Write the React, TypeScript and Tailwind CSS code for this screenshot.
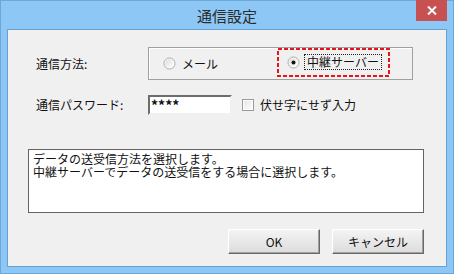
import React from 'react';

const font = { fontFamily: '"Noto Sans CJK JP", "Noto Sans", sans-serif' };

const Radio: React.FC<{ checked?: boolean }> = ({ checked }) => (
  <svg width="13" height="13" viewBox="0 0 13 13" className="shrink-0">
    <defs>
      <linearGradient id={checked ? 'rg1' : 'rg0'} x1="0" y1="0" x2="1" y2="1">
        <stop offset="0" stopColor="#dcdcdc" />
        <stop offset="1" stopColor="#ffffff" />
      </linearGradient>
    </defs>
    <circle cx="6.5" cy="6.5" r="5.5" fill="#fff" stroke="#a9a9a9" strokeWidth="1" />
    <circle cx="6.5" cy="6.5" r="4.3" fill={`url(#${checked ? 'rg1' : 'rg0'})`} />
    {checked && <circle cx="6.5" cy="6.5" r="2" fill="#111" />}
  </svg>
);

const Button: React.FC<{ label: string }> = ({ label }) => (
  <button
    className="flex h-[25px] w-[92px] items-center justify-center border border-t-[#ffffff] border-l-[#ffffff] border-r-[#696969] border-b-[#696969] bg-gradient-to-b from-[#f4f4f4] to-[#dcdcdc] text-[12px] text-[#111] shadow-[inset_-1px_-1px_0_#a0a0a0]"
    style={font}
  >
    {label}
  </button>
);

const help = 'データの送受信方法を選択します。\n中継サーバーでデータの送受信をする場合に選択します。';

export default function App() {
  return (
    <div className="flex h-[274px] w-[454px] flex-col border border-[#6fa6d8] bg-[#8cc7f6]" style={font}>
      {/* title bar */}
      <div className="relative flex h-[28px] items-center justify-center">
        <span className="text-[15px] leading-none text-[#2b2b2b]">通信設定</span>
        <div className="absolute right-[6px] top-[-1px] flex h-[21px] w-[31px] items-center justify-center bg-[#c75050]">
          <svg width="10" height="9" viewBox="0 0 10 9">
            <path d="M1 0.5 L9 8.5 M9 0.5 L1 8.5" stroke="#fff" strokeWidth="2" />
          </svg>
        </div>
      </div>

      {/* client area */}
      <div className="mx-[6px] mb-[6px] flex flex-1 flex-col border border-[#6a9fd2] bg-[#f0f0f0] text-[12px] text-[#111]">
        <div className="mt-[17px] flex h-[33px] items-center">
          <span className="w-[140px] pl-[28px]">通信方法:</span>
          <div className="flex h-[33px] w-[265px] items-center border border-[#a0a0a0] shadow-[inset_1px_1px_0_#fff]">
            <div className="flex items-center gap-[6px] pl-[14px]">
              <Radio />
              <span>メール</span>
            </div>
            <div className="relative ml-[59px] mt-[-3px] flex h-[29px] w-[113px] items-center pl-[10px]">
              <svg className="absolute inset-0" width="113" height="29">
                <rect x="1" y="1" width="111" height="27" fill="none" stroke="#e8141b" strokeWidth="2" strokeDasharray="4 2" />
              </svg>
              <Radio checked />
              <span className="ml-[4px] flex h-[16px] items-center border border-dotted border-[#222] px-[2px] leading-none">
                中継サーバー
              </span>
            </div>
          </div>
        </div>

        <div className="mt-[15px] flex h-[20px] items-center">
          <span className="w-[140px] pl-[28px]">通信パスワード:</span>
          <div className="flex h-[20px] w-[84px] items-center border-2 border-t-[#6d6d6d] border-l-[#6d6d6d] border-r-[#f0f0f0] border-b-[#f0f0f0] bg-white pl-[1px] text-[14px] font-bold leading-none">
            ****
          </div>
          <div className="ml-[10px] h-[12px] w-[12px] border border-[#9a9a9a] bg-gradient-to-br from-[#e4e4e4] to-white shadow-[inset_0_0_0_1px_#fff]" />
          <span className="ml-[6px]">伏せ字にせず入力</span>
        </div>

        <div className="ml-[20px] mt-[34px] h-[64px] w-[396px] whitespace-pre-line border border-[#646464] bg-white px-[4px] pt-[2px] leading-[13px]">
          {help}
        </div>

        <div className="mr-[22px] mt-[16px] flex justify-end gap-[12px]">
          <Button label="OK" />
          <Button label="キャンセル" />
        </div>
      </div>
    </div>
  );
}
